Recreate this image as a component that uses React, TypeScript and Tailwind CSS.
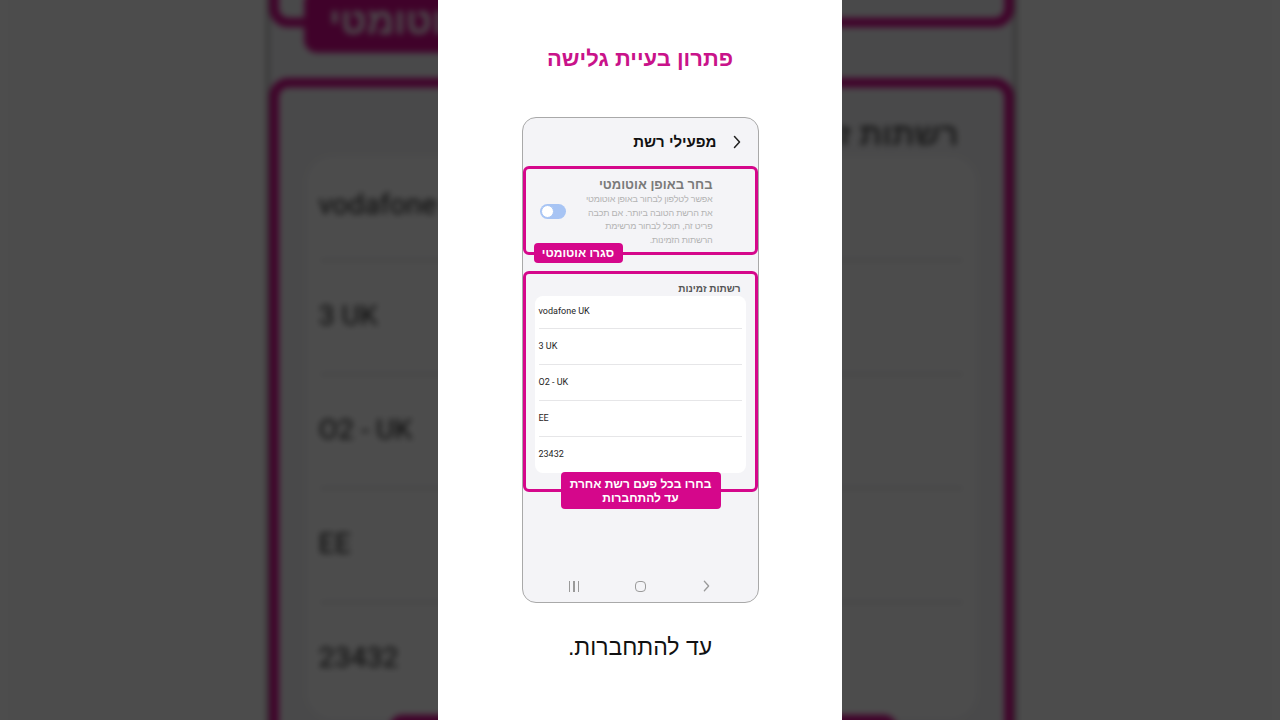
const HEB = "font-['Liberation_Sans','DejaVu_Sans',sans-serif]";
const LAT = "font-['Roboto','Liberation_Sans',sans-serif]";

const networks = ["vodafone UK", "3 UK", "O2 - UK", "EE", "23432"];

function Chevron({ className }: { className?: string }) {
  return (
    <svg viewBox="0 0 8 14" className={className} fill="none" stroke="currentColor" strokeWidth="1.5" strokeLinecap="round" strokeLinejoin="round">
      <path d="M1.5 1.5 L6.5 7 L1.5 12.5" />
    </svg>
  );
}

function Toggle() {
  return (
    <div dir="ltr" className="flex h-[15px] w-[26px] items-center rounded-full bg-[#a7c4f4] px-[1px]">
      <div className="size-[13px] rounded-full border-[1.5px] border-[#a7c4f4] bg-white" />
    </div>
  );
}

function NavBar() {
  return (
    <div dir="ltr" className="mt-auto flex h-[32px] items-center justify-center">
      <div className="flex w-[66px] justify-center">
        <div className="flex h-[11px] gap-[3px]">
          <span className="w-[1.5px] bg-[#9a9a9a]" />
          <span className="w-[1.5px] bg-[#9a9a9a]" />
          <span className="w-[1.5px] bg-[#9a9a9a]" />
        </div>
      </div>
      <div className="flex w-[66px] justify-center">
        <div className="size-[11px] rounded-[4px] border-[1.5px] border-[#9a9a9a]" />
      </div>
      <div className="flex w-[66px] justify-center">
        <Chevron className="h-[12px] w-[7px] text-[#9a9a9a]" />
      </div>
    </div>
  );
}

function Phone() {
  return (
    <div dir="rtl" className="mt-[44px] flex h-[486px] w-[237px] flex-col overflow-hidden rounded-[14px] border border-[#a9a9a9] bg-[#f4f4f7]">
      <div className="flex h-[48px] items-center gap-[15px] pr-[16px]">
        <Chevron className="h-[14px] w-[10px] text-[#222]" />
        <span className={`${HEB} text-[15px] font-bold text-[#111]`}>מפעילי רשת</span>
      </div>

      <div className="relative h-[89px] rounded-[6px] border-[3px] border-[#d5078b]">
        <div className="flex justify-between pt-[8px] pr-[42px]">
          <div className={`${HEB} whitespace-nowrap`}>
            <div className="text-[13px] font-bold leading-[16px] text-[#7a7a7a]">בחר באופן אוטומטי</div>
            <div className="text-[9px] leading-[13.7px] tracking-[-0.2px] text-[#b3b3b3]">
              אפשר לטלפון לבחור באופן אוטומטי
              <br />
              את הרשת הטובה ביותר. אם תכבה
              <br />
              פריט זה, תוכל לבחור מרשימת
              <br />
              הרשתות הזמינות.
            </div>
          </div>
          <div className="mt-[27px] ml-[14px]">
            <Toggle />
          </div>
        </div>
        <div className={`${HEB} absolute top-[74px] left-[8px] flex h-[20px] w-[89px] items-center justify-center rounded-[4px] bg-[#d5078b] text-[12px] font-bold text-white`}>
          סגרו אוטומטי
        </div>
      </div>

      <div className="relative mt-[16px] h-[221px] rounded-[6px] border-[3px] border-[#d5078b]">
        <div className={`${HEB} pt-[9px] pr-[14px] text-[10px] leading-[12px] font-bold text-[#555]`}>רשתות זמינות</div>
        <div dir="ltr" className="mx-[9px] mt-[1px] rounded-[8px] bg-white px-[4px]">
          {networks.map((n, i) => (
            <div
              key={n}
              className={`${LAT} flex items-center text-[9px] text-[#1e1e1e] ${i === 0 ? "h-[33px]" : "h-[36px]"} ${i < networks.length - 1 ? "border-b border-[#e6e6e8]" : ""}`}
            >
              {n}
            </div>
          ))}
        </div>
        <div className={`${HEB} absolute top-[198px] left-[35px] flex h-[37px] w-[160px] flex-col items-center justify-center rounded-[4px] bg-[#d5078b] text-[12px] leading-[14px] font-bold text-white`}>
          <span>בחרו בכל פעם רשת אחרת</span>
          <span>עד להתחברות</span>
        </div>
      </div>

      <NavBar />
    </div>
  );
}

function Frame() {
  return (
    <div className="flex h-[720px] w-[404px] flex-col items-center bg-white">
      <h1 dir="rtl" className={`${HEB} pt-[45px] text-[22px] leading-[28px] font-bold text-[#c9138a]`}>
        פתרון בעיית גלישה
      </h1>
      <Phone />
      <p dir="rtl" className={`${HEB} mt-[29px] text-[23px] leading-[30px] text-[#111]`}>
        עד להתחברות.
      </p>
    </div>
  );
}

export default function App() {
  return (
    <div className="relative flex h-[720px] w-full justify-center overflow-hidden bg-[#4d4d4d]">
      <div className="absolute inset-0 brightness-[0.3] blur-[3px]">
        <div className="absolute top-0 left-[438px] scale-[3.168]">
          <Frame />
        </div>
      </div>
      <div className="relative">
        <Frame />
      </div>
    </div>
  );
}
